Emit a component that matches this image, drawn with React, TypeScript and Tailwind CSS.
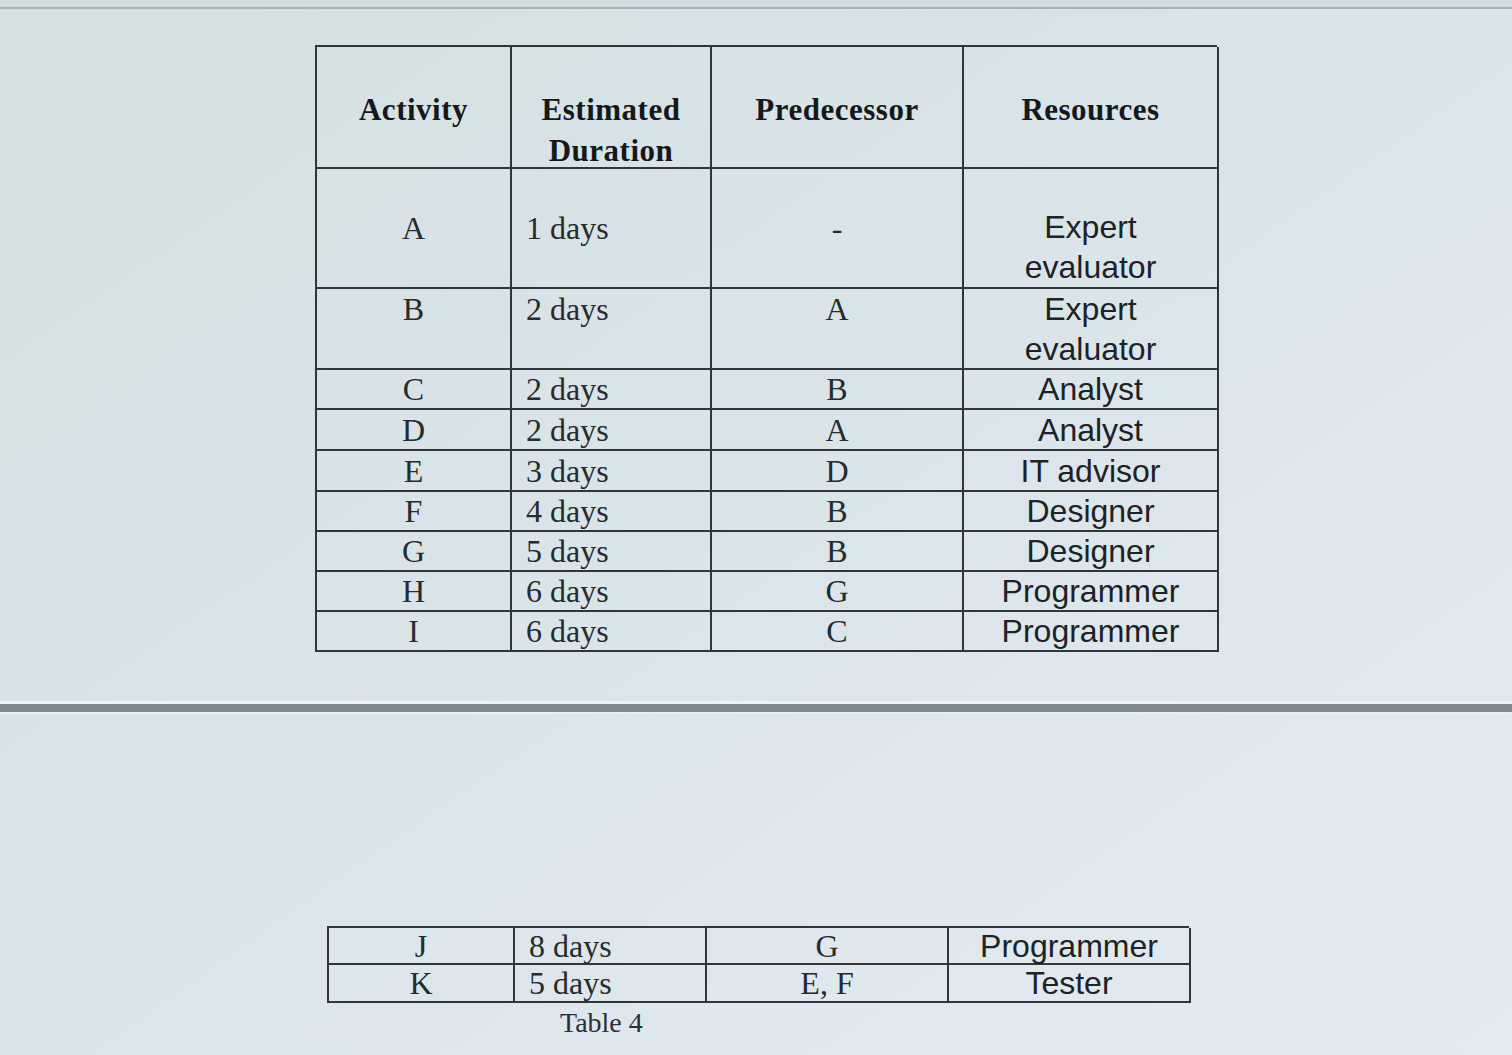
const serif = "font-['Liberation_Serif','Times_New_Roman',serif]";
const sans = "font-['Liberation_Sans',Arial,sans-serif]";

type Row = {
  act: string;
  dur: string;
  pred: string;
  res: string[];
  h: string;
  align: "center" | "top" | "a";
};

const rows: Row[] = [
  { act: "A", dur: "1 days", pred: "-", res: ["Expert", "evaluator"], h: "h-[120px]", align: "a" },
  { act: "B", dur: "2 days", pred: "A", res: ["Expert", "evaluator"], h: "h-[81px]", align: "top" },
  { act: "C", dur: "2 days", pred: "B", res: ["Analyst"], h: "h-[40px]", align: "center" },
  { act: "D", dur: "2 days", pred: "A", res: ["Analyst"], h: "h-[41px]", align: "center" },
  { act: "E", dur: "3 days", pred: "D", res: ["IT advisor"], h: "h-[41px]", align: "center" },
  { act: "F", dur: "4 days", pred: "B", res: ["Designer"], h: "h-[40px]", align: "center" },
  { act: "G", dur: "5 days", pred: "B", res: ["Designer"], h: "h-[40px]", align: "center" },
  { act: "H", dur: "6 days", pred: "G", res: ["Programmer"], h: "h-[40px]", align: "center" },
  { act: "I", dur: "6 days", pred: "C", res: ["Programmer"], h: "h-[40px]", align: "center" },
];

const rows2: Row[] = [
  { act: "J", dur: "8 days", pred: "G", res: ["Programmer"], h: "h-[37px]", align: "center" },
  { act: "K", dur: "5 days", pred: "E, F", res: ["Tester"], h: "h-[38px]", align: "center" },
];

const cell = "border-r-2 border-b-2 border-[#30373b] flex";

function Body({ data }: { data: Row[] }) {
  return (
    <>
      {data.map((r) => {
        const v = r.align === "top" ? "items-start" : "items-center";
        const resV = r.align === "a" ? "items-end" : r.align === "top" ? "items-start" : "items-center";
        return (
          <div key={r.act} className="contents">
            <div className={`${cell} ${r.h} ${v} justify-center ${serif} text-[32px] leading-[40px] text-[#252b2f]`}>
              {r.act}
            </div>
            <div className={`${cell} ${r.h} ${v} justify-start pl-[14px] ${serif} text-[32px] leading-[40px] text-[#252b2f]`}>
              {r.dur}
            </div>
            <div className={`${cell} ${r.h} ${v} justify-center ${serif} text-[32px] leading-[40px] text-[#252b2f]`}>
              {r.pred}
            </div>
            <div className={`${cell} ${r.h} ${resV} justify-center ${sans} text-[32px] leading-[40px] text-[#1d2226]`}>
              <div className="text-center">
                {r.res.map((t) => (
                  <div key={t}>{t}</div>
                ))}
              </div>
            </div>
          </div>
        );
      })}
    </>
  );
}

export default function App() {
  return (
    <div className="w-full h-[1055px] overflow-hidden bg-gradient-to-br from-[#d5e0e2] via-[#dae5ea] to-[#e2ebf1]">
      <div className="h-[7px] bg-[#d3dcdf]" />
      <div className="h-[2px] bg-[#aab3b8]" />

      <div className="mt-[36px] ml-[315px] w-[902px] grid grid-cols-[195px_200px_252px_255px] border-l-2 border-t-2 border-[#30373b]">
        {["Activity", "Estimated|Duration", "Predecessor", "Resources"].map((h) => (
          <div
            key={h}
            className={`${cell} h-[122px] items-start justify-center pt-[42px] ${serif} font-bold text-[31px] leading-[41px] tracking-[0.5px] text-[#15191c]`}
          >
            <div className="text-center">
              {h.split("|").map((l) => (
                <div key={l}>{l}</div>
              ))}
            </div>
          </div>
        ))}
        <Body data={rows} />
      </div>

      <div className="mt-[49px] h-[3px] bg-[#eef3f6]" />
      <div className="h-[8px] bg-[#7e898f]" />
      <div className="h-[2px] bg-[#e9f0f4]" />

      <div className="mt-[212px] ml-[327px] w-[862px] grid grid-cols-[186px_192px_242px_242px] border-l-2 border-t-2 border-[#30373b]">
        <Body data={rows2} />
      </div>
      <div className={`ml-[560px] mt-[2px] ${serif} text-[28px] leading-[36px] text-[#2a3034]`}>Table 4</div>
    </div>
  );
}
